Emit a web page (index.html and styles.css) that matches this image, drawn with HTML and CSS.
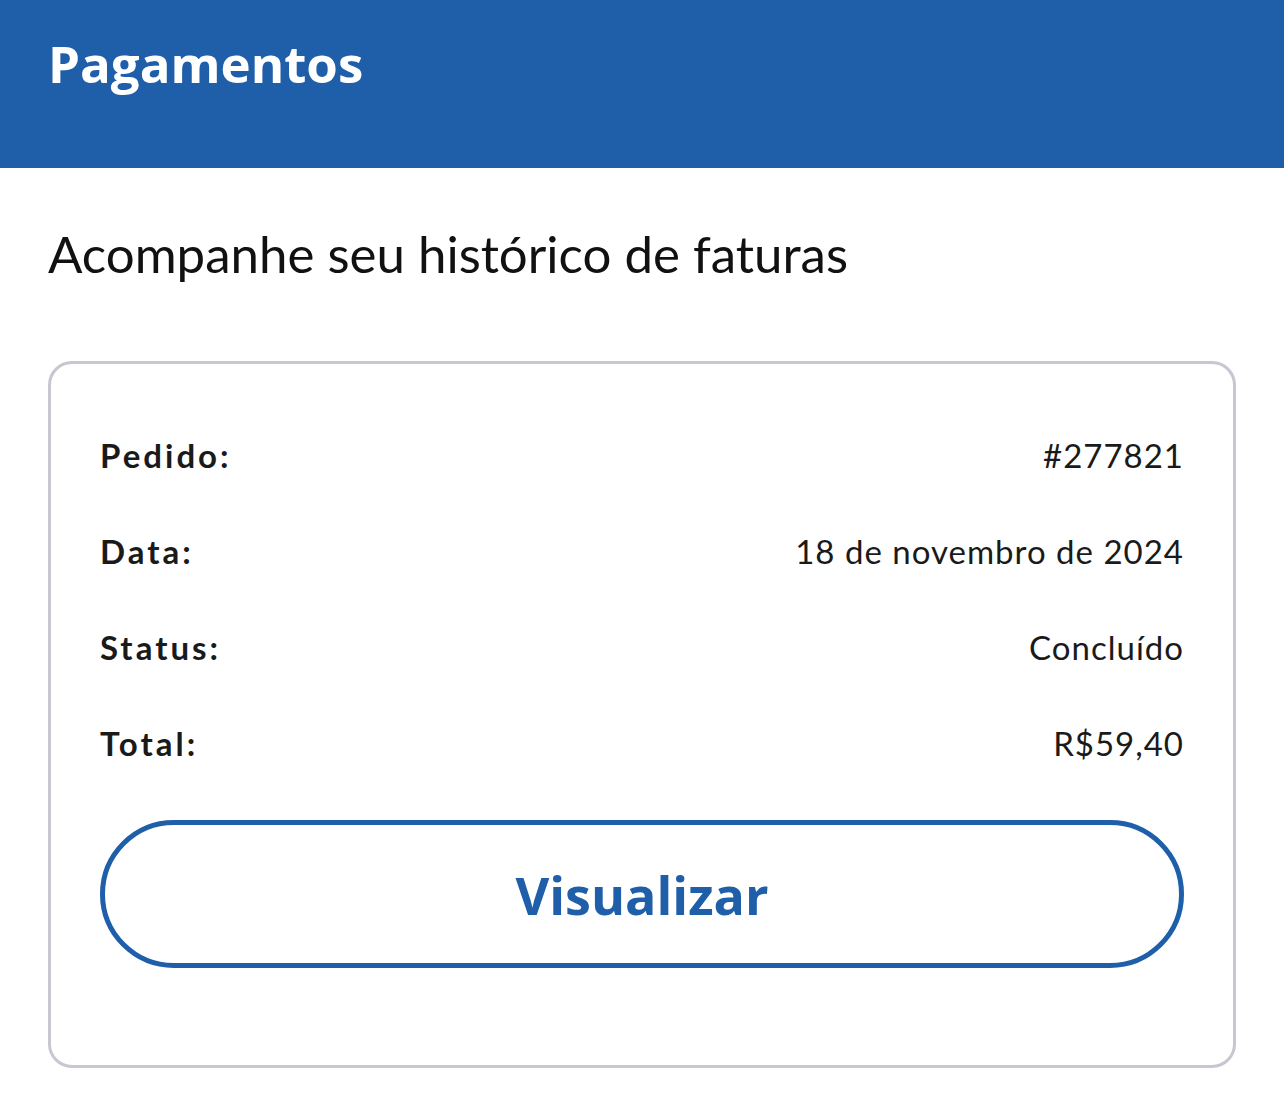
FILE: index.html
```html
<!DOCTYPE html>
<html lang="pt-BR">
<head>
<meta charset="utf-8">
<title>Pagamentos</title>
<link rel="stylesheet" href="styles.css">
</head>
<body>
<header class="topbar">
  <h1 class="topbar-title">Pagamentos</h1>
</header>
<main class="content">
  <p class="subtitle">Acompanhe seu histórico de faturas</p>
  <section class="card">
    <div class="row"><span class="label">Pedido:</span><span class="value">#277821</span></div>
    <div class="row"><span class="label">Data:</span><span class="value">18 de novembro de 2024</span></div>
    <div class="row"><span class="label">Status:</span><span class="value">Concluído</span></div>
    <div class="row"><span class="label">Total:</span><span class="value">R$59,40</span></div>
    <button class="btn" type="button">Visualizar</button>
  </section>
</main>
</body>
</html>
```
FILE: styles.css
```css
* { box-sizing: border-box; }
html, body { margin: 0; padding: 0; background: #ffffff; }
body { font-family: "Lato", "Noto Sans", sans-serif; color: #1a1a1a; }

.topbar {
  height: 168px;
  background: #1f5fa9;
  display: flex;
  align-items: flex-start;
  padding: 29px 0 0 48px;
}
.topbar-title {
  margin: 0;
  font-family: "Open Sans", "Noto Sans", sans-serif;
  font-weight: 700;
  font-size: 51px;
  line-height: 68px;
  color: #ffffff;
}

.content { padding: 0 48px; }
.subtitle {
  margin: 0;
  padding-top: 52px;
  height: 193px;
  font-family: "Lato", sans-serif;
  font-size: 51px;
  line-height: 68px;
  color: #111111;
}

.card {
  border: 3px solid #c6c7d0;
  border-radius: 24px;
  height: 707px;
  padding: 43px 49px 0 49px;
  display: flex;
  flex-direction: column;
}
.row {
  height: 96px;
  display: flex;
  align-items: center;
  justify-content: space-between;
  font-size: 33px;
}
.label { font-weight: 700; letter-spacing: 3px; color: #1a1a1a; }
.value { font-weight: 400; letter-spacing: 1px; color: #1a1a1a; }

.btn {
  margin-top: 29px;
  height: 148px;
  width: 100%;
  border: 5px solid #1f5fa9;
  border-radius: 74px;
  background: #ffffff;
  color: #1f5fa9;
  font-family: "Open Sans", "Noto Sans", sans-serif;
  font-weight: 700;
  font-size: 52px;
  cursor: pointer;
}
```
